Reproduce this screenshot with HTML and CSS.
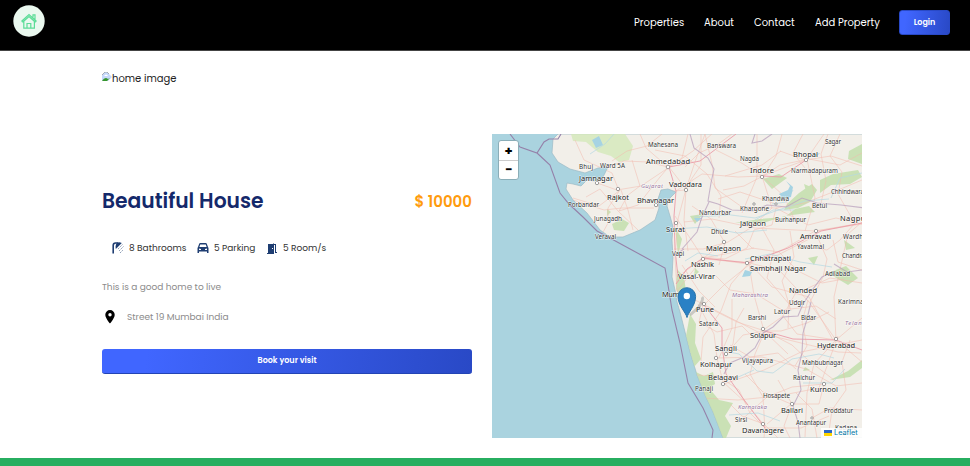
FILE: index.html
```
<!DOCTYPE html>
<html lang="en">
<head>
<meta charset="utf-8">
<title>Beautiful House</title>
<link rel="stylesheet" href="styles.css">
</head>
<body>
<header class="header">
  <a class="logo" href="#" aria-label="Home"><svg viewBox="0 0 32 32" width="32" height="32"><circle cx="16" cy="16" r="15.7" fill="#eaf8ef"/><g fill="none" stroke="#5bdc97" stroke-width="1.2"><path d="M8.6 16.2 16 9.6l7.4 6.6M9.8 17 16 11.5l6.2 5.5M20 12.6V9.8h2v4.6M10.8 16.6v6.6h10.6v-6.6M14 23v-4.5h3.8V23M8.6 16.2l1.2.9M23.4 16.2l-1.2.9"/></g></svg></a>
  <nav class="nav"><a class="w-properties">Properties</a><a class="w-about">About</a><a class="w-contact">Contact</a><a class="w-add">Add Property</a><button class="button login">Login</button></nav>
</header>
<main class="property">
  <div class="cover"><svg viewBox="0 0 10 10" width="10" height="10"><path d="M0 8V3l3-3h2l5 5-4 4H0z" fill="#c5d8fa"/><path d="M0 3 3 0h2l2 2" fill="none" stroke="#a6abb3"/><path d="M2 4q2-3 4 0z" fill="#fff"/><path d="M0 9q3-5 6-2l2-1-3 3z" fill="#36962d"/></svg><span>home image</span></div>
  <div class="columns">
    <section class="details">
      <div class="heading"><h1>Beautiful House</h1><strong>$ 10000</strong></div>
      <div class="facilities">
        <span class="facility"><svg class="icon-shower" viewBox="0 0 14 12" width="14" height="12"><path d="M1.2 11.5V3.5Q1.2 1 3.5 1H6" fill="none" stroke="#1f3e72" stroke-width="1.6"/><path d="M3.8 7 9.8 1Q7-.6 5 .8 3 3 3.8 7z" fill="#1f3e72"/><path d="m6 7 5-5M7 9l5-5M8 11l3-3" stroke="#7185a5" stroke-width=".8" stroke-dasharray="1.6 .8"/></svg><span class="w-bath">8 Bathrooms</span></span>
        <span class="facility"><svg class="icon-car" viewBox="0 0 12 12" width="12" height="12"><path fill="#1f3e72" fill-rule="evenodd" d="M1 5 2.3 1.5Q2.6 1 3.3 1h5.4q.7 0 1 .5L11 5l.5 1v5H10V9.5H2V11H.5V6zM3.2 2.4 2.4 5h7.2l-.8-2.6zM2 6.5V8h2V7zm8 0L8 7v1h2z"/></svg><span class="w-park">5 Parking</span></span>
        <span class="facility"><svg class="icon-door" viewBox="0 0 11 11" width="11" height="11"><path fill="#1f3e72" fill-rule="evenodd" d="M1 1h5V0l1 1h2v8h1v1H8V2H7v9H0v-1h1zm4 4v1h1V5z"/></svg><span class="w-room">5 Room/s</span></span>
      </div>
      <p class="description">This is a good home to live</p>
      <div class="address"><svg viewBox="0 0 16 16" width="16" height="16"><path fill="#000" fill-rule="evenodd" d="M8 1a4.7 4.7 0 0 0-4.7 4.7C3.3 9.2 8 14.5 8 14.5s4.7-5.3 4.7-8.8A4.7 4.7 0 0 0 8 1zm0 3a1.7 1.7 0 1 1 0 3.4A1.7 1.7 0 0 1 8 4z"/></svg><span>Street 19 Mumbai India</span></div>
      <button class="button book">Book your visit</button>
    </section>
    <section class="map" aria-label="Map">
      <svg class="tiles" viewBox="492 134 370 304" width="370" height="304">
        <defs><path id="land" d="M558 134 553 139 552 153 558 162 570 169 585 173 598 168 608 167 603 177 594 181 587 180 581 186 573 184 567 183 566 189 573 200 587 213 600 230 610 237 623 237 640 230 655 220 659 208 658 199 661 190 668 189 676 192 668 200 667 206 670 216 673 227 672 240 673 257 672 277 675 290 677 302 680 312 685 332 690 352 697 375 705 395 713 412 718 425 723 438H863V134z"/><clipPath id="coast"><use href="#land"/></clipPath></defs>
        <path fill="#aad3df" d="M492 134h370v304H492z"/><use href="#land" fill="#f2efe9" stroke="#9cbac5" stroke-width=".7"/>
        <g clip-path="url(#coast)">
          <path class="scrub" d="M571 134h54l8 12-4 14-10 2-8-6-13-4-12-10-13-1z"/>
          <g class="forest">
            <path d="m787 204 12-11 13-9 5 6-7 12-12 6-14 2zM820 180l13-6 25-4 4 7-12 7-19 1-11 8zM849 151l13-7v20l-14-5zM763 179l16-5 8 4-15 11zM690 216l13-2-8 10zM735 223l25-4 25-2 10-8 14-3 6 6-30 4-22 7zM612 224l10-5 7 4-5 8-10-1zM607 209l4 3-4 4zM694 371l10 5 9-4 2 12-6 4 10 12 14 3-8 13 6 10-5 12h-4l-17-36zM808 258l10-2-4 9zM828 273l18-7 12 12-10 7zM848 371l14-11v8l-12 9-20 3z"/>
            <path d="m690 314 6 10-1 19 6 16-7 8-8-31zM677 269l7 8 2 14-5 8-5-10zM675 227l7 12-4 16zM695 268l4 4-5 4zM804 184l7 3-5 4zM844 240l11 8-9 2zM805 367l5 3-7 1z"/>
          </g>
          <g class="roads">
            <path d="M575 140l9 20 11 5 17 8 7 18-20 15-26-8M597 183l20 7 24-4 30-20 22-15 21-19M621 190l7 20 5 20M573 200l31 10 18-2 32 0M601 236l7-13 0-15 12-18M657 207l10-15 17-2 17-25 0-31M619 211l19-6 22-28 12-14M668 167l-20-5-24-1-19 7M612 161l15-10 20-5 15-12"/>
            <path d="M669 167l17 22-8 30-3 38 2 34 26 13 57 29 78 19 23 1M676 191l26-17 36 3 24-1 44-16 18-26M684 222l28-3 43 9 41 2 20 1 46-7M674 249l29 0 25-7 24-15 20-19-10-32M703 259l42 3 33-7 39-20M680 275l25-18 19-15M677 291l26-33 45 6 36-15 31-18 47-8M704 305l20-20 26-21 22 23 37 10 24 43M698 304l16 30 3 24 6 24 22 20 20 24-1 12"/>
            <path d="M703 305l34 17 28 9-10 23-5 20 13 23 2 34M717 358l45-1 44 12 30 17 26-3M724 384l40-14 37-18 61-12M703 398l35 2 40-4 41-8 19-52M738 423l29-26 25-10 32-3M836 340l-22 24-7 29-2 44M836 340l-27-38-29-31-34-9M836 340l-2-43 7-32 7-31 14-12M749 264l5 31 10 36 24 23M682 265l17 26 16 16M807 159l8 39-10 33M742 213l15-36 0-43M776 208l29-5 38-15 19-8M763 176l17-11 29-6 31 6 22-12M685 167l14-14 18-8 15-11M803 134l-10 19 12 15M828 134l-7 20 5 27-5 22M705 134l-9 25-10 30-2 31 4 31"/>
            <path d="M705 134l7 30 3 24 27 19 34 1 32 17 28-7 26 6M675 216l15 22 13 20 22-4 29-6M725 176l37-11 19-14M748 264l-17 20-10 27-18 26-2 24M762 331l21-15 12-22 35-16 32 5M765 331l27 14 16 15 26 20M719 358l13-30 0-29M695 375l23 1 21 14 11 23 15 15 36 0 28-12M796 393l16 16 5 29M776 208l-4 17-18 5-7 18-22 11-24-2M815 231l12 28-4 18-13 25M855 223l-15 17-13 10-24-4"/>
            <path d="M640 134l6 14 22 19 14-9 6-24M632 160l8 26-12 9-9 16M586 197l14-8 18 22 20 19M655 150l30 6 22 18 14 22-2 22M716 150l24 12 22 14 22 20 12 27M782 134l-6 22-13 20-19 10-21 4M840 134l-10 22 12 16-4 22 16 28M780 151l25 9 26-4 31 10M718 199l22-7 36 12M692 206l19 13 14 24-6 22M735 231l17 17 27 4 20 20M762 228l12 22-7 28 22 26-1 24M790 231l4 26-12 24 9 30M800 272l22 11 22-4M833 240l5 22 24 8"/>
            <path d="M716 276l14 14 26 4 26 16 34-4 20 13M703 305l-4 17 18 10 25-6 12 12M730 345l20 12 28-4 18 16M744 308l-8 14-3 22-7 10M783 316l14 18 39 6M808 300l-6 22 5 24-12 20M824 384l-5 20-28 0-24 20M745 374l18 18 28 12M778 380l14 24-8 22 6 12M850 340l-8 22 4 28-14 20-4 28M730 404l12 12 22 8 14 14M812 418l18-10 32 2M836 340l26-22M836 340l26 22M765 331l-22 4-17 19M765 331l16 0 26-8 22-11"/>
          </g>
          <g class="major-roads"><path d="M669 167l7 24-2 25 1 33 3 28M676 284l11-15 16-11 45 5 40-15 33-17 41-8M704 305l18 23 0 18 4 28 16 23 23 31M765 331l28 8 43 1 26 10M669 167l31-6 36-27M763 176l18 1 25-17"/></g>
          <g class="rivers"><path d="M694 217l37-2 24 3 50-17 24-2M672 229l35-2 30 6 30-3M755 220l18-10 21 0M745 259l25-5 30 8 32 5M719 350l20 4 18 17 16 2 19-14 27-5 15 4M736 378l18-8M845 369l-13 14-29 0M685 261l13-8 20 3M793 190l-7 12-14 2M831 198l9-20 22-5M590 154l15-10 9-10M729 415l29-2 22 8"/></g>
          <path fill="#a6d3e3" d="m779 194 9-4 2-4-4-5 7 6-2 10-8 2zM745 270l7 2-2 4-8 1zM694 218l8 0-5 4zM812 155l8-2-4 4zM592 140l4 8 7-3-4-9z"/>
          <g class="state-border"><path d="M690 134l4 14 14 10 6 11-3 14-3 18 10 3 14 6 21 1 14-6 19 2 16-9 15 5 24 2 24 3M709 202l-7 15-5 15-15 17M684 249l-9 6M755 134l-3 9 10-2 10-7M724 374l6-11 14-6 11-9 8-15 10-6 10-10 15-1 5-12 10-15 9-12 9-4M811 302l-4 17-4 14-1 20-4 17 3 20-8 16 5 16 2 16M834 264l13 8 15-2"/></g>
          <g class="towns"><circle cx="668" cy="167" r="1.8"/><circle cx="618" cy="189" r="1.7"/><circle cx="656" cy="205" r="1.7"/><circle cx="597" cy="183" r="1.7"/><circle cx="686" cy="190" r="1.7"/><circle cx="676" cy="223" r="1.7"/><circle cx="762" cy="177" r="1.7"/><circle cx="806" cy="160" r="1.7"/><circle cx="754" cy="204" r="1.2"/><circle cx="776" cy="204" r="1.2"/><circle cx="724" cy="242" r="1.7"/><circle cx="703" cy="259" r="1.7"/><circle cx="747" cy="263" r="1.7"/><circle cx="816" cy="231" r="1.7"/><circle cx="763" cy="329" r="1.7"/><circle cx="704" cy="304" r="1.7"/><circle cx="726" cy="354" r="1.7"/><circle cx="716" cy="358" r="1.7"/><circle cx="723" cy="384" r="1.7"/><circle cx="836" cy="339" r="1.7"/><circle cx="824" cy="384" r="1.7"/><circle cx="792" cy="404" r="1.7"/><circle cx="763" cy="424" r="1.7"/><circle cx="812" cy="418" r="1.2"/></g>
        </g>
        <path class="sea-border" d="M510 134 520 147 537 153 544 142 549 139 558 139 561 134M537 153l13 12 10 28 9 11 14 13 14 14 68 37 3 17 4 25 8 33 8 40 15 25 10 22-1 8"/>
        <g class="labels">
          <text x="648" y="147" textLength="30">Mahesana</text><text x="707" y="148" textLength="29">Banswara</text><text x="825" y="144" textLength="16">Sagar</text>
          <text class="city" x="646" y="164" textLength="44">Ahmedabad</text><text x="740" y="161" textLength="19">Nagda</text><text class="city" x="793" y="157" textLength="25">Bhopal</text><text x="579" y="169" textLength="14">Bhuj</text><text x="600" y="168" textLength="25">Ward 5A</text>
          <text class="city" x="579" y="181" textLength="34">Jamnagar</text><text class="city" x="669" y="187" textLength="33">Vadodara</text><text class="city" x="750" y="173" textLength="24">Indore</text><text x="791" y="173" textLength="47">Narmadapuram</text><text class="region" x="641" y="188" textLength="22">Gujarat</text>
          <text class="city" x="607" y="200" textLength="22">Rajkot</text><text class="city" x="637" y="203" textLength="37">Bhavnagar</text><text x="568" y="207" textLength="31">Porbandar</text><text x="594" y="221" textLength="28">Junagadh</text><text x="595" y="239" textLength="21">Veraval</text><text class="city" x="666" y="232" textLength="19">Surat</text>
          <text x="762" y="201" textLength="27">Khandwa</text><text x="740" y="211" textLength="29">Khargone</text><text x="831" y="194" textLength="33">Chhindwara</text><text x="812" y="208" textLength="15">Betul</text><text x="699" y="215" textLength="32">Nandurbar</text><text class="city" x="740" y="226" textLength="26">Jalgaon</text><text x="775" y="222" textLength="31">Burhanpur</text><text class="city" x="840" y="221" textLength="29">Nagpur</text><text x="711" y="234" textLength="17">Dhule</text>
          <text class="city" x="706" y="251" textLength="35">Malegaon</text><text class="city" x="800" y="239" textLength="31">Amravati</text><text x="843" y="239" textLength="24">Wardha</text><text x="797" y="249" textLength="27">Yavatmal</text><text x="672" y="256" textLength="12">Vapi</text><text class="city" x="691" y="267" textLength="23">Nashik</text><text class="city" x="750" y="261" textLength="41">Chhatrapati</text><text class="city" x="750" y="271" textLength="56">Sambhaji Nagar</text><text x="842" y="258" textLength="32">Chandrapur</text><text x="825" y="276" textLength="25">Adilabad</text><text class="city" x="678" y="279" textLength="37">Vasai-Virar</text>
          <text class="city" x="662" y="297" textLength="27">Mumbai</text><text class="region" x="732" y="297" textLength="36">Maharashtra</text><text class="city" x="789" y="293" textLength="28">Nanded</text><text x="789" y="305" textLength="16">Udgir</text><text x="838" y="304" textLength="36">Karimnagar</text><text class="city" x="696" y="312" textLength="18">Pune</text><text x="748" y="320" textLength="18">Barshi</text><text x="774" y="314" textLength="16">Latur</text><text x="801" y="320" textLength="15">Bidar</text><text class="region" x="845" y="325" textLength="33">Telangana</text><text x="699" y="326" textLength="19">Satara</text>
          <text class="city" x="750" y="338" textLength="26">Solapur</text><text class="city" x="817" y="348" textLength="38">Hyderabad</text><text class="city" x="715" y="351" textLength="22">Sangli</text><text class="city" x="700" y="367" textLength="32">Kolhapur</text><text x="742" y="363" textLength="31">Vijayapura</text><text x="802" y="365" textLength="41">Mahbubnagar</text><text class="city" x="708" y="380" textLength="30">Belagavi</text><text x="793" y="380" textLength="22">Raichur</text><text class="city" x="810" y="392" textLength="28">Kurnool</text><text x="695" y="391" textLength="18">Panaji</text><text x="763" y="398" textLength="27">Hosapete</text>
          <text class="region" x="738" y="409" textLength="29">Karnataka</text><text class="city" x="781" y="413" textLength="22">Ballari</text><text x="824" y="413" textLength="29">Proddatur</text><text x="735" y="422" textLength="12">Sirsi</text><text class="city" x="742" y="433" textLength="42">Davanagere</text><text x="796" y="425" textLength="30">Anantapur</text><text x="835" y="430" textLength="22">Kadapa</text>
        </g>
        <path d="m690 315 9-8q5-8 3-10" fill="none" stroke="#555" stroke-opacity=".25" stroke-width="3"/><path d="M687 317.5c-1-5-9-12-9-21a8.8 8.8 0 1 1 17.6 0c0 9-7.6 16-8.6 21z" fill="#2a81c5" stroke="#2873aa"/><circle cx="686.8" cy="296" r="3.2" fill="white"/>
      </svg>
      <div class="zoom"><a>+</a><a>−</a></div>
      <div class="attribution"><svg viewBox="0 0 8 6" width="8" height="6"><path fill="#2c67c7" d="M0 0h8v3H0z"/><path fill="#ffd500" d="M0 3h8v3H0z"/></svg><span>Leaflet</span></div>
    </section>
  </div>
</main>
<footer class="footer"></footer>
</body>
</html>
```

FILE: styles.css
```
* { box-sizing: border-box; }
body { margin: 0; height: 466px; display: flex; flex-direction: column; overflow: hidden; background: #fff; font-family: Poppins, Inter, "Liberation Sans", sans-serif; }
h1, p { margin: 0; }
svg { display: block; flex: none; }
.header { height: 51px; flex: none; display: flex; justify-content: space-between; align-items: flex-start; padding: 5px 20px 0 13px; background: #000; border-bottom: 1px solid #444; }
.nav { display: flex; align-items: center; height: 35px; color: #fff; font-size: 10px; }
.nav a { white-space: nowrap; margin-right: 20px; }
.nav .w-properties { width: 50px; }
.nav .w-about { width: 30px; }
.nav .w-contact { width: 41px; }
.nav .w-add { width: 65px; margin-right: 19px; }
.button { border: 0; padding: 0; border-radius: 3px; background: linear-gradient(97deg, #4066ff 12%, #2949c6); color: #fff; font: 600 8px Poppins, Inter, sans-serif; }
.login { width: 51px; height: 25px; border: 1px solid #2949c6; }
.property { flex: 1; padding: 20px 108px 20px 102px; }
.cover { display: flex; height: 63px; font-size: 10px; line-height: 15px; color: #222; }
.cover svg { margin-top: 1px; }
.columns { display: flex; gap: 20px; }
.details { width: 370px; height: 304px; padding-top: 51px; }
.heading { height: 32px; display: flex; align-items: center; justify-content: space-between; }
.heading h1 { color: #14296b; font-size: 20.3px; font-weight: 600; }
.heading strong { color: #ff9b0d; font-size: 15px; font-weight: 600; }
.facilities { display: flex; margin: 21px 0 0 9px; height: 20px; align-items: center; font-size: 9px; color: #333; }
.facility { display: flex; align-items: center; white-space: nowrap; }
.icon-shower { margin: 0 3px 0 1px; }
.icon-car { margin-right: 5px; }
.icon-door { margin-right: 5px; }
.w-bath { width: 68px; }
.w-park { width: 53px; }
.description { margin-top: 22px; font-size: 9px; line-height: 14px; color: #8c8b8b; }
.address { display: flex; align-items: center; gap: 9px; margin-top: 14px; height: 18px; font-size: 9px; color: #8c8b8b; }
.book { display: block; margin-top: 23px; width: 370px; height: 25px; border-bottom: 1px solid #2344b4; }
.map { width: 370px; height: 304px; position: relative; overflow: hidden; }
.zoom { position: absolute; top: 6px; left: 6px; width: 21px; height: 40px; border: 1px solid #8baeb8; border-radius: 3px; overflow: hidden; background: #fff; }
.zoom a { display: block; height: 19px; line-height: 20px; text-align: center; font-size: 13px; font-weight: 700; }
.zoom a + a { border-top: 1px solid #ccc; line-height: 18px; }
.attribution { position: absolute; right: 0; bottom: 0; width: 41px; height: 10px; display: flex; align-items: center; gap: 2px; padding-left: 3px; background: rgb(255 255 255 / 85%); color: #0078a8; font: 7.3px/10px Inter, sans-serif; }
.scrub { fill: #d3e9ba; opacity: .8; }
.forest { fill: #c3dfad; opacity: .85; }
.roads { fill: none; stroke: #f3b8ac; stroke-width: .6; opacity: .85; }
.major-roads { fill: none; stroke: #eb9ca8; stroke-width: .9; }
.rivers { fill: none; stroke: #b4d8e3; stroke-width: .7; }
.state-border { fill: none; stroke: #b9a2bd; stroke-width: 1.1; opacity: .75; }
.sea-border { fill: none; stroke: #9581a9; stroke-width: 1.1; }
.towns { fill: #fff; stroke: #777; stroke-width: .7; }
.labels { font: 6.3px "Noto Sans", sans-serif; fill: #333; stroke: #fff; stroke-width: 1px; stroke-opacity: .75; paint-order: stroke; }
.labels .city { font-size: 7.5px; fill: #222; }
.labels .region { font-size: 6px; font-style: italic; fill: #9672a0; }
.footer { height: 8px; flex: none; background: #27ae60; }
```
